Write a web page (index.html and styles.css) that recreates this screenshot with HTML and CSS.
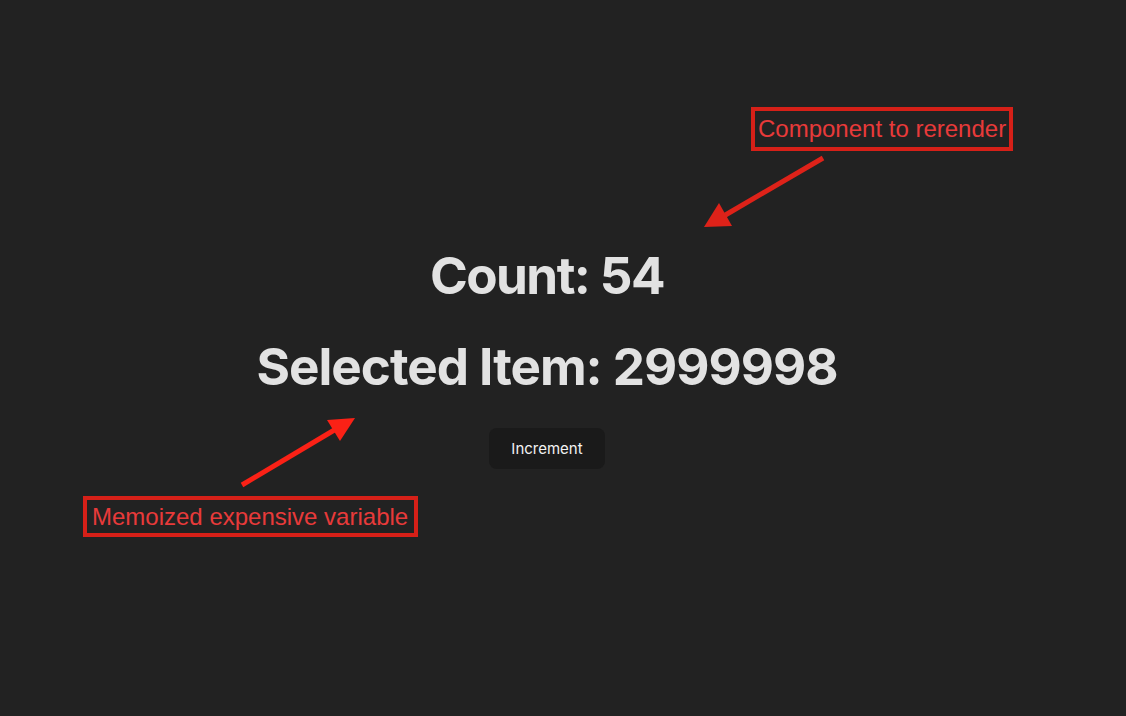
FILE: index.html
```html
<!DOCTYPE html>
<html lang="en">
<head>
<meta charset="utf-8">
<title>Memo demo</title>
<link rel="stylesheet" href="styles.css">
</head>
<body>
<main class="app">
  <h1 class="title title-count">Count: 54</h1>
  <h1 class="title">Selected Item: 2999998</h1>
  <button class="btn" type="button">Increment</button>
</main>

<div class="note note-top">Component to rerender</div>
<div class="note note-bottom">Memoized expensive variable</div>

<svg class="arrows" width="1126" height="716" viewBox="0 0 1126 716" aria-hidden="true">
  <line x1="823" y1="158" x2="722" y2="217" stroke="#de2219" stroke-width="5"/>
  <polygon points="704,227 719,203 732,226" fill="#de2219"/>
  <line x1="242" y1="485" x2="336" y2="429" stroke="#fb2116" stroke-width="5"/>
  <polygon points="355,418 327,420 340,441" fill="#fb2116"/>
</svg>
</body>
</html>
```

FILE: styles.css
```css
html, body {
  margin: 0;
  padding: 0;
}

body {
  background: #222222;
  color: rgba(255, 255, 255, 0.87);
  font-family: Inter, "Noto Sans", system-ui, sans-serif;
  width: 1126px;
  height: 716px;
  overflow: hidden;
  position: relative;
}

.app {
  display: flex;
  flex-direction: column;
  align-items: center;
  padding: 247px 32px 0 0;
}

.title {
  font-size: 51.2px;
  line-height: 1.1;
  font-weight: 700;
  letter-spacing: -1px;
  margin: 0 0 34.3px;
  color: #e2e2e2;
}

.title-count {
  letter-spacing: -1.6px;
}

.btn {
  font-family: Inter, "Noto Sans", sans-serif;
  font-size: 15px;
  font-weight: 400;
  line-height: 24px;
  padding: 7.5px 21px;
  border: 1px solid transparent;
  border-radius: 8px;
  background: #1a1a1a;
  color: #f2f2f2;
  cursor: pointer;
}

.note {
  position: absolute;
  font-family: "Liberation Sans", Arial, sans-serif;
  font-size: 24px;
  line-height: 1.15;
  color: #e83a3a;
  border: 4px solid #d62018;
  white-space: nowrap;
}

.note-top {
  left: 751px;
  top: 107px;
  padding: 4px 3px 4px 3px;
}

.note-bottom {
  left: 83px;
  top: 496px;
  padding: 3px 6px 2px 5px;
}

.arrows {
  position: absolute;
  left: 0;
  top: 0;
  pointer-events: none;
}
```
